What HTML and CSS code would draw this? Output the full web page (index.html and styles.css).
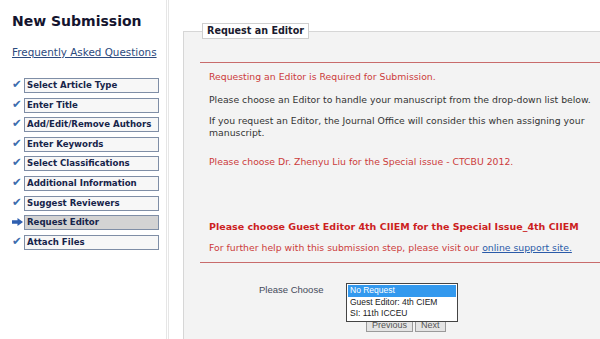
FILE: index.html
```html
<!DOCTYPE html>
<html>
<head>
<meta charset="utf-8">
<link rel="stylesheet" href="styles.css">
</head>
<body>
<div class="page">
  <aside class="sidebar">
    <h1 class="title">New Submission</h1>
    <a class="faq" href="#">Frequently Asked Questions</a>
    <ul class="steps">
      <li class="step"><span class="mark check">&#10004;</span><span class="box">Select Article Type</span></li>
      <li class="step"><span class="mark check">&#10004;</span><span class="box">Enter Title</span></li>
      <li class="step"><span class="mark check">&#10004;</span><span class="box">Add/Edit/Remove Authors</span></li>
      <li class="step"><span class="mark check">&#10004;</span><span class="box">Enter Keywords</span></li>
      <li class="step"><span class="mark check">&#10004;</span><span class="box">Select Classifications</span></li>
      <li class="step"><span class="mark check">&#10004;</span><span class="box">Additional Information</span></li>
      <li class="step"><span class="mark check">&#10004;</span><span class="box">Suggest Reviewers</span></li>
      <li class="step current"><span class="mark arrow"><svg width="11" height="8" viewBox="0 0 11 8"><path d="M0 2.3H5.5V0L11 4L5.5 8V5.7H0Z" fill="#2f5fb0"/></svg></span><span class="box">Request Editor</span></li>
      <li class="step"><span class="mark check">&#10004;</span><span class="box">Attach Files</span></li>
    </ul>
  </aside>
  <main class="main">
    <fieldset class="panel">
      <legend class="legend">Request an Editor</legend>
      <div class="rule rule-top"></div>
      <p class="txt red first">Requesting an Editor is Required for Submission.</p>
      <p class="txt dark">Please choose an Editor to handle your manuscript from the drop-down list below.</p>
      <p class="txt dark">If you request an Editor, the Journal Office will consider this when assigning your manuscript.</p>
      <p class="txt red spaced">Please choose Dr. Zhenyu Liu for the Special issue - CTCBU 2012.</p>
      <p class="txt red bold">Please choose Guest Editor 4th CIIEM for the Special Issue_4th CIIEM</p>
      <p class="txt red help">For further help with this submission step, please visit our <a class="link" href="#">online support site.</a></p>
      <div class="rule rule-bottom"></div>
      <div class="choose">
        <span class="label">Please Choose</span>
        <div class="select-wrap">
          <div class="buttons">
            <span class="btn">Previous</span>
            <span class="btn">Next</span>
          </div>
          <ul class="list">
            <li class="opt sel">No Request</li>
            <li class="opt">Guest Editor: 4th CIEM</li>
            <li class="opt">SI: 11th ICCEU</li>
          </ul>
        </div>
      </div>
    </fieldset>
  </main>
</div>
</body>
</html>
```

FILE: styles.css
```css
html, body {
  margin: 0;
  padding: 0;
  background: #fff;
  width: 600px;
  height: 339px;
  overflow: hidden;
}
body {
  font-family: "DejaVu Sans", Verdana, sans-serif;
}
.page {
  display: flex;
  height: 339px;
}
.sidebar {
  width: 154px;
  flex: none;
  padding: 0 0 0 12px;
  border-right: 3px double #e6e6e6;
}
.title {
  margin: 12px 0 0 0;
  font-size: 14px;
  line-height: 18px;
  font-weight: bold;
  color: #14142e;
}
.faq {
  display: block;
  margin-top: 16px;
  font-size: 10.4px;
  line-height: 13px;
  color: #2c4a7e;
  text-decoration: underline;
}
.steps {
  list-style: none;
  margin: 19px 0 0 0;
  padding: 0;
  display: flex;
  flex-direction: column;
  gap: 4.6px;
}
.step {
  display: flex;
  align-items: center;
  height: 15px;
}
.mark {
  width: 12px;
  flex: none;
  color: #3a6cae;
  font-size: 11.5px;
  line-height: 12px;
  margin-top: -3px;
}
.arrow {
  display: flex;
  align-items: center;
  margin-top: -2px;
}
.box {
  box-sizing: border-box;
  width: 135px;
  height: 15px;
  border: 1px solid #7f8ea6;
  background: #f7f7f7;
  padding: 0 0 0 2px;
  font-size: 8.6px;
  line-height: 13px;
  font-weight: bold;
  color: #17254a;
  white-space: nowrap;
}
.current .box {
  background: #d3d3d3;
}
.main {
  flex: 1;
  padding: 23px 0 0 14px;
  overflow: hidden;
}
.panel {
  margin: 0;
  width: 440px;
  padding: 0 0 40px 16px;
  border: 1px solid #d6d6d6;
  background: #f3f3f3;
  box-sizing: border-box;
}
.legend {
  margin-left: 2px;
  padding: 0 4px;
  height: 16px;
  box-sizing: border-box;
  border: 1px solid #cfcfcf;
  background: #fff;
  font-size: 9.6px;
  line-height: 14px;
  font-weight: bold;
  color: #1a1a2e;
}
.rule {
  height: 1px;
  background: #c86b6b;
}
.rule-top {
  margin-top: 23px;
}
.txt {
  margin: 0 0 9px 9px;
  font-size: 9.3px;
  line-height: 12px;
  width: 392px;
}
.first {
  margin-top: 8px;
  margin-bottom: 11px;
}
.red { color: #cc3b3b; }
.dark { color: #333; }
.spaced { margin-top: 17px; }
.bold {
  margin-top: 53px;
  font-weight: bold;
  font-size: 9.5px;
  color: #cc1f1f;
}
.help { margin-bottom: 8px; }
.link {
  color: #2a5aa8;
  text-decoration: underline;
}
.choose {
  display: flex;
  align-items: flex-start;
  margin-top: 21px;
  padding-left: 59px;
}
.label {
  width: 87px;
  font-family: "Liberation Sans", Arial, sans-serif;
  font-size: 9.5px;
  line-height: 12px;
  color: #444a5a;
}
.select-wrap {
  position: relative;
  width: 112px;
  height: 50px;
}
.buttons {
  display: flex;
  gap: 2px;
  padding: 35px 0 0 20px;
}
.btn {
  box-sizing: border-box;
  height: 13px;
  padding: 0 5px;
  border: 1px solid #9a9a9a;
  background: #e4e4e4;
  font-family: "Liberation Sans", Arial, sans-serif;
  font-size: 9px;
  line-height: 11px;
  color: #555;
}
.list {
  position: absolute;
  left: 0;
  top: -1px;
  width: 112px;
  margin: 0;
  padding: 1px;
  list-style: none;
  box-sizing: border-box;
  border: 1px solid #444;
  background: #fff;
  font-family: "Liberation Sans", Arial, sans-serif;
  font-size: 8.5px;
  line-height: 11.5px;
  color: #222;
}
.opt {
  padding-left: 2px;
  white-space: nowrap;
}
.sel {
  background: #3399ee;
  color: #fff;
}
```
